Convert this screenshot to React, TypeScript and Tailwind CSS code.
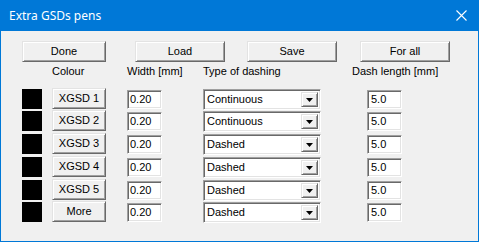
import React from "react";

const raised =
  "border border-t-[#e3e3e3] border-l-[#e3e3e3] border-b-[#696969] border-r-[#696969] shadow-[inset_1px_1px_0_#ffffff,inset_-1px_-1px_0_#a0a0a0] bg-[#f0f0f0]";
const sunken =
  "border border-t-[#a0a0a0] border-l-[#a0a0a0] border-b-white border-r-white shadow-[inset_1px_1px_0_#696969,inset_-1px_-1px_0_#e3e3e3] bg-white";

function Btn({ label, cls }: { label: string; cls: string }) {
  return (
    <div className={`${raised} ${cls} flex items-center justify-center leading-none`}>
      <span>{label}</span>
    </div>
  );
}

const rows = [
  { name: "XGSD 1", dash: "Continuous", h: "h-[22px]" },
  { name: "XGSD 2", dash: "Continuous", h: "h-[23px]" },
  { name: "XGSD 3", dash: "Dashed", h: "h-[23px]" },
  { name: "XGSD 4", dash: "Dashed", h: "h-[23px]" },
  { name: "XGSD 5", dash: "Dashed", h: "h-[22px]" },
  { name: "More", dash: "Dashed", h: "h-[22px]" },
];

export default function App() {
  return (
    <div className="w-[479px] h-[242px] flex flex-col bg-[#f0f0f0] font-['Liberation_Sans',Arial,sans-serif] text-[11px] text-black overflow-hidden">
      <div className="h-[31px] shrink-0 bg-[#0078d7] flex items-center justify-between pl-[9px] pr-[11px]">
        <span className="text-white text-[12px] font-['Noto_Sans',sans-serif] leading-none">Extra GSDs pens</span>
        <svg width="11" height="11" viewBox="0 0 11 11" className="mr-[1px]">
          <path d="M0.5 0.5 L10.5 10.5 M10.5 0.5 L0.5 10.5" stroke="white" strokeWidth="1.1" />
        </svg>
      </div>
      <div className="flex-1 border-x border-b border-[#0078d7] pl-[21px] pt-[10px]">
        <div className="flex h-[21px]">
          <Btn label="Done" cls="w-[84px] h-[21px]" />
          <Btn label="Load" cls="w-[90px] h-[21px] ml-[29px]" />
          <Btn label="Save" cls="w-[90px] h-[21px] ml-[22px]" />
          <Btn label="For all" cls="w-[90px] h-[21px] ml-[23px]" />
        </div>
        <div className="flex h-[13px] mt-[3px] leading-[13px]">
          <span className="ml-[30px] w-[75px]">Colour</span>
          <span className="w-[76px]">Width [mm]</span>
          <span className="w-[149px]">Type of dashing</span>
          <span>Dash length [mm]</span>
        </div>
        <div className="flex flex-col mt-[10px]">
          {rows.map((r) => (
            <div key={r.name} className={`flex items-start ${r.h}`}>
              <div className="w-[20px] h-[20px] mt-[1px] bg-black" />
              <Btn label={r.name} cls="w-[54px] h-[21px] ml-[10px]" />
              <div className={`${sunken} w-[35px] h-[19px] ml-[21px] mt-[2px] flex items-center pl-[2px] leading-none`}>
                0.20
              </div>
              <div className={`${sunken} w-[118px] h-[21px] ml-[41px] mt-[1px] flex items-stretch p-[2px]`}>
                <div className="flex-1 flex items-center pl-[1px] leading-none">{r.dash}</div>
                <div className={`${raised} w-[17px] flex items-center justify-center`}>
                  <svg width="7" height="4" viewBox="0 0 7 4">
                    <polygon points="0,0 7,0 3.5,4" fill="black" />
                  </svg>
                </div>
              </div>
              <div className={`${sunken} w-[35px] h-[19px] ml-[46px] mt-[2px] flex items-center pl-[3px] leading-none`}>
                5.0
              </div>
            </div>
          ))}
        </div>
      </div>
    </div>
  );
}
